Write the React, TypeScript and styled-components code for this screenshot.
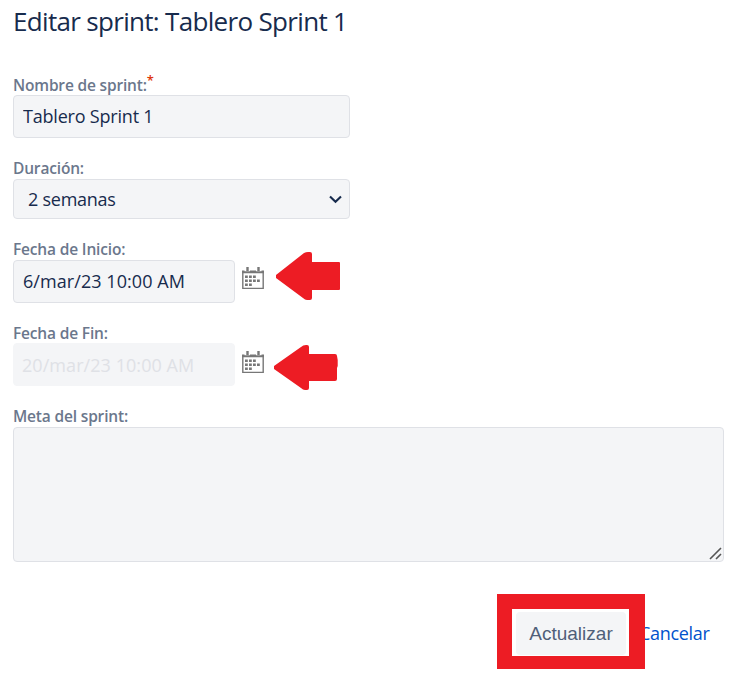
import React from 'react';
import styled, { createGlobalStyle } from 'styled-components';

const GlobalStyle = createGlobalStyle`
  *, *::before, *::after { box-sizing: border-box; }
  body {
    margin: 0;
    background: #fff;
    color: #172b4d;
    font-family: "Segoe UI", "Open Sans", "Noto Sans", sans-serif;
  }
`;

const Dialog = styled.form`
  width: 738px;
  height: 676px;
  padding: 1px 14px 0 13px;
  overflow: hidden;
`;

const Title = styled.h2`
  margin: 0 0 33px;
  height: 40px;
  line-height: 40px;
  font-size: 26px;
  font-weight: 400;
  letter-spacing: -0.68px;
  white-space: nowrap;
`;

const Field = styled.div<{ $gap?: number }>`
  display: flex;
  flex-direction: column;
  margin-bottom: ${({ $gap = 20 }) => $gap}px;
`;

const Label = styled.label<{ $drop?: number }>`
  display: flex;
  height: 21px;
  padding-top: ${({ $drop = 0 }) => $drop}px;
  line-height: 21px;
  font-size: 15.5px;
  font-weight: 600;
  letter-spacing: -0.17px;
  color: #6b778c;
  white-space: nowrap;
`;

const Required = styled.span`
  height: 10px;
  line-height: 10px;
  color: #de350b;
  font-size: 13px;
`;

const Row = styled.div`
  display: flex;
  align-items: flex-start;
`;

const TextBox = styled.input<{ $width: number; $tracking?: number }>`
  width: ${({ $width }) => $width}px;
  height: 43px;
  padding: 0 9px 2px;
  border: 1px solid #dfe1e6;
  border-radius: 4px;
  background: #f4f5f7;
  color: #172b4d;
  font: 400 18px "Segoe UI", "Open Sans", "Noto Sans", sans-serif;
  letter-spacing: ${({ $tracking = 0 }) => $tracking}px;
  outline: none;

  &:disabled {
    padding: 0 8px;
    border-color: #f4f5f7;
    color: #dfe1e6;
  }
`;

const SelectBox = styled.div`
  display: flex;
  align-items: center;
  justify-content: space-between;
  width: 337px;
  height: 40px;
  padding: 0 7px 0 14px;
  border: 1px solid #dfe1e6;
  border-radius: 4px;
  background: #f4f5f7;
  font-size: 18px;
  letter-spacing: -0.25px;
`;

const CalendarButton = styled.button<{ $top: number }>`
  width: 22px;
  height: 23px;
  margin: ${({ $top }) => $top}px 0 0 7px;
  padding: 0;
  border: 0;
  background: none;

  svg { display: block; }
`;

const Pointer = styled.svg<{ $left: number; $top: number }>`
  flex: none;
  margin: ${({ $top, $left }) => `${$top}px 0 -12px ${$left}px`};
`;

const Goal = styled.div`
  display: flex;
  align-items: flex-end;
  justify-content: flex-end;
  width: 711px;
  height: 135px;
  padding: 1px;
  border: 1px solid #dfe1e6;
  border-radius: 4px;
  background: #f4f5f7;
`;

const Actions = styled.div`
  display: flex;
  align-items: center;
  height: 75px;
  margin: 32px 0 0 484px;
`;

const Highlight = styled.div`
  position: relative;
  z-index: 1;
  flex: none;
  width: 148px;
  height: 75px;
  padding: 3px 3px 1px 4px;
  border: 15px solid #ed1c24;
  border-right-width: 16px;
  border-bottom-width: 13px;
  background: #fff;
`;

const Submit = styled.button`
  display: block;
  width: 110px;
  height: 43px;
  padding: 0;
  border: 0;
  border-radius: 4px;
  background: #f4f5f7;
  color: #505f79;
  font: 400 19px "Liberation Sans", Arial, sans-serif;
`;

const Cancel = styled.a`
  margin: 2px 0 0 -6px;
  color: #0052cc;
  font-size: 18px;
  letter-spacing: -0.32px;
  text-decoration: none;
`;

const dots = [
  [3, 9], [7, 9], [11, 9],
  [3, 13], [7, 13], [11, 13], [15, 13],
  [3, 17], [7, 17],
];

const Calendar = ({ top = 7 }: { top?: number }) => (
  <CalendarButton $top={top} type="button" aria-label="Calendario">
    <svg width="22" height="23" viewBox="0 0 22 23">
      <path d="M0.8 5H21.2V21.4H0.8Z" fill="#fff" stroke="#777" strokeWidth="1.4" />
      <path d="M0 3.5h2.5v1.5H8V3.5h6v1.5h5.5V3.5H22v2.7H0z" fill="#777" />
      <path d="M4.3 0h2.4v4H4.3zM15.3 0h2.4v4h-2.4z" fill="#777" />
      {dots.map(([x, y]) => (
        <rect key={`${x}-${y}`} x={x} y={y - 0.5} width="2.8" height="2.5" fill="#777" />
      ))}
    </svg>
  </CalendarButton>
);

const StartPointer = () => (
  <Pointer $left={12} $top={-8} width="64" height="48" viewBox="0 0 64 48">
    <path d="M0 23L28 1Q30 0 32 0H34Q36 0 36 2V10H63Q64 10 64 11V37Q64 38 63 38H36V46Q36 48 34 48H31Q29 48 27 46L0 26Z" fill="#ed1c24" />
  </Pointer>
);

const EndPointer = () => (
  <Pointer $left={10} $top={2} width="64" height="45" viewBox="0 0 64 45">
    <path d="M0 21L27 2Q29 0 32 0H33Q35 0 35 2V9H61Q63 9 63 11L63.7 15V21L63 23V34Q63 36 61 36H35V43Q35 45 33 45H31Q29 45 27 43L0 24Z" fill="#ed1c24" />
  </Pointer>
);

export default function App() {
  return (
    <>
      <GlobalStyle />
      <Dialog>
        <Title>Editar sprint: Tablero Sprint 1</Title>
        <Field>
          <Label $drop={1}>Nombre de sprint:<Required>*</Required></Label>
          <TextBox $width={337} $tracking={-0.2} defaultValue="Tablero Sprint 1" />
        </Field>
        <Field>
          <Label>Duración:</Label>
          <SelectBox>
            2 semanas
            <svg width="13" height="9" viewBox="0 0 13 9" fill="none" stroke="#172b4d" strokeWidth="2.1">
              <path d="M1 1.5L6.5 6.8L12 1.5" />
            </svg>
          </SelectBox>
        </Field>
        <Field $gap={19}>
          <Label>Fecha de Inicio:</Label>
          <Row>
            <TextBox $width={222} $tracking={0.06} defaultValue="6/mar/23 10:00 AM" />
            <Calendar />
            <StartPointer />
          </Row>
        </Field>
        <Field>
          <Label $drop={1}>Fecha de Fin:</Label>
          <Row>
            <TextBox $width={222} $tracking={0.06} defaultValue="20/mar/23 10:00 AM" disabled />
            <Calendar top={8} />
            <EndPointer />
          </Row>
        </Field>
        <Field $gap={0}>
          <Label>Meta del sprint:</Label>
          <Goal>
            <svg width="13" height="13" viewBox="0 0 13 13" stroke="#555" strokeWidth="1.6">
              <path d="M1 12L12 1M7 12L12 7" />
            </svg>
          </Goal>
        </Field>
        <Actions>
          <Highlight><Submit type="button">Actualizar</Submit></Highlight>
          <Cancel href="#">Cancelar</Cancel>
        </Actions>
      </Dialog>
    </>
  );
}
